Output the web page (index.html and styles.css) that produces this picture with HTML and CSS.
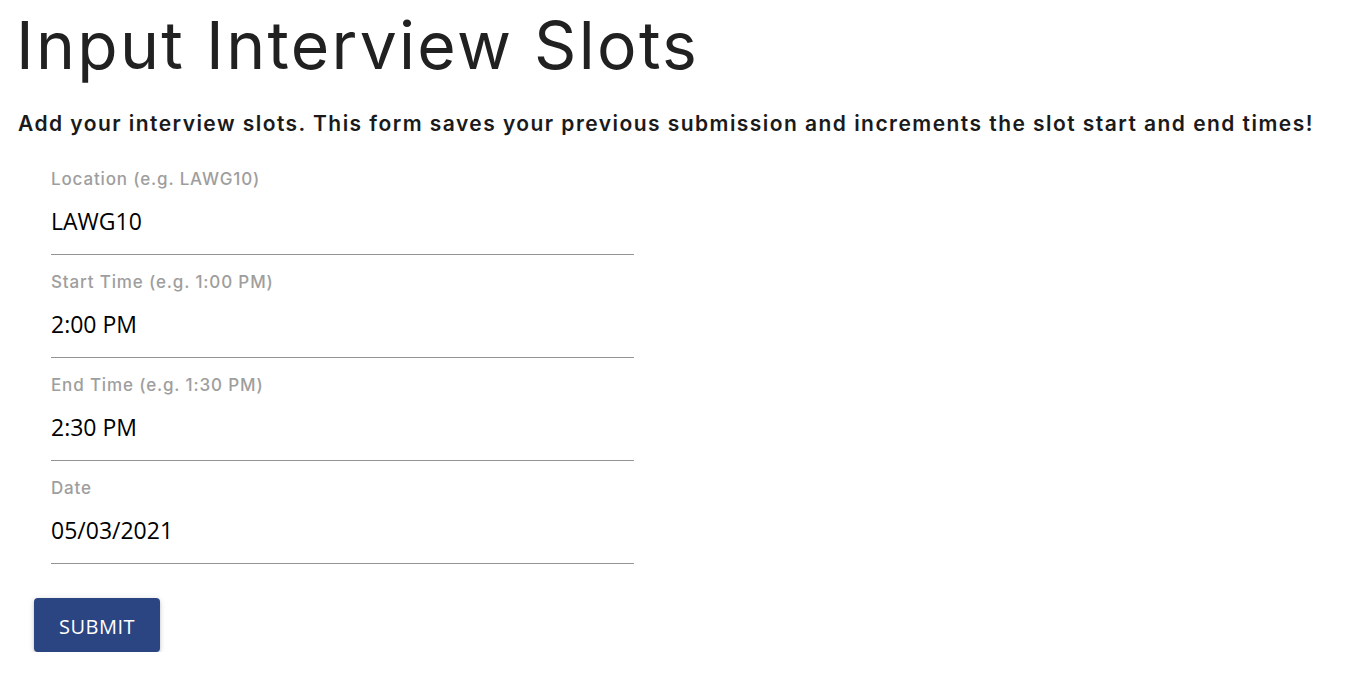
FILE: index.html
```html
<!DOCTYPE html>
<html lang="en">
<head>
<meta charset="utf-8">
<title>Input Interview Slots</title>
<link rel="stylesheet" href="styles.css">
</head>
<body>
<main class="page">
  <h1 class="title">Input Interview Slots</h1>
  <p class="subtitle">Add your interview slots. This form saves your previous submission and increments the slot start and end times!</p>
  <form class="form">
    <div class="fields">
      <div class="field">
        <span class="label">Location (e.g. LAWG10)</span>
        <span class="value">LAWG10</span>
      </div>
      <div class="field">
        <span class="label">Start Time (e.g. 1:00 PM)</span>
        <span class="value">2:00 PM</span>
      </div>
      <div class="field">
        <span class="label">End Time (e.g. 1:30 PM)</span>
        <span class="value">2:30 PM</span>
      </div>
      <div class="field">
        <span class="label">Date</span>
        <span class="value">05/03/2021</span>
      </div>
    </div>
    <button type="button" class="submit">SUBMIT</button>
  </form>
</main>
</body>
</html>
```

FILE: styles.css
```css
html, body {
  margin: 0;
  padding: 0;
  background: #ffffff;
}

.page {
  display: flex;
  flex-direction: column;
  padding: 5px 0 0 16px;
}

.title {
  margin: 0;
  font-family: Inter, "Liberation Sans", sans-serif;
  font-weight: 400;
  font-size: 66px;
  line-height: 80px;
  color: #212121;
  letter-spacing: 2.3px;
}

.subtitle {
  margin: 25px 0 0 2px;
  font-family: Inter, "Liberation Sans", sans-serif;
  font-weight: 600;
  font-size: 21px;
  line-height: 28px;
  color: #1a1a1a;
  letter-spacing: 1.45px;
  white-space: nowrap;
}

.form {
  display: flex;
  flex-direction: column;
  margin-top: 14px;
}

.fields {
  display: flex;
  flex-direction: column;
  margin-left: 35px;
  width: 583px;
}

.field {
  display: flex;
  flex-direction: column;
  padding: 15px 0 17px 0;
  border-bottom: 1px solid #949494;
}

.label {
  font-family: Inter, "Liberation Sans", sans-serif;
  font-weight: 500;
  font-size: 17px;
  line-height: 24px;
  color: #9e9e9e;
  letter-spacing: 0.85px;
}

.value {
  margin-top: 14px;
  font-family: "Open Sans", "Noto Sans", sans-serif;
  font-size: 23px;
  line-height: 32px;
  color: #000000;
}

.submit {
  align-self: flex-start;
  margin: 34px 0 0 18px;
  width: 126px;
  height: 54px;
  padding: 3px 0 0 0;
  border: none;
  border-radius: 4px;
  background: #2b4582;
  color: #ffffff;
  font-family: "Open Sans", "Noto Sans", sans-serif;
  font-size: 20px;
  letter-spacing: 0.5px;
  box-shadow: 0 3px 1px -2px rgba(0,0,0,0.2), 0 2px 3px 0 rgba(0,0,0,0.16), 0 1px 6px 0 rgba(0,0,0,0.14);
  cursor: pointer;
}
```
